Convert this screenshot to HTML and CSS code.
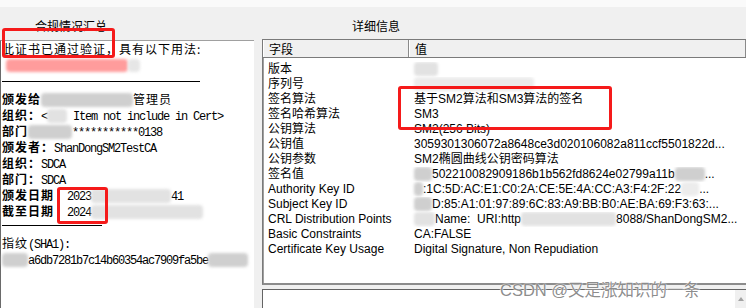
FILE: index.html
```html
<!DOCTYPE html>
<html lang="zh-CN">
<head>
    <meta charset="UTF-8">
    <title>证书详细信息</title>
    <link rel="stylesheet" href="styles.css">
</head>
<body>
    <div class="strip"></div>
    <div class="window">
        <!-- 合规情况汇总 -->
        <section class="summary">
            <div class="caption">合规情况汇总</div>
            <div class="summary-body">
                <p class="line">此证书已通过验证，具有以下用法:</p>
                <div class="usage"><span class="smudge pink"></span><span class="smudge grey w12"></span></div>
                <hr class="rule long">
                <p class="line first"><b>颁发给</b><span class="smudge w92"></span>管理员</p>
                <p class="line"><b>组织：</b><span class="mono">&lt;</span><span class="smudge light w20"></span><span class="mono"> Item not include in Cert&gt;</span></p>
                <p class="line"><b>部门</b><span class="smudge w44"></span><span class="mono">***********0138</span></p>
                <p class="line"><b>颁发者：</b><span class="mono">ShanDongSM2TestCA</span></p>
                <p class="line"><b>组织：</b><span class="mono">SDCA</span></p>
                <p class="line"><b>部门：</b><span class="mono">SDCA</span></p>
                <p class="line"><b>颁发日期</b><span class="mono date">2023</span><span class="smudge light w80"></span><span class="mono">41</span></p>
                <p class="line"><b>截至日期</b><span class="mono date">2024</span><span class="smudge light w112"></span></p>
                <hr class="rule short">
                <p class="line print">指纹<span class="mono">(SHA1):</span></p>
                <p class="line"><span class="smudge w26"></span><span class="mono">a6db7281b7c14b60354ac7909fa5be</span><span class="smudge w40"></span></p>
            </div>
        </section>

        <!-- 详细信息 -->
        <section class="detail">
            <div class="caption">详细信息</div>
            <div class="list">
                <div class="list-head">
                    <span class="head-cell">字段</span>
                    <span class="head-cell">值</span>
                </div>
                <div class="rows">
                    <div class="row"><span>版本</span><span><span class="smudge light w24"></span></span></div>
                    <div class="row"><span>序列号</span><span><span class="smudge faint w120"></span></span></div>
                    <div class="row"><span>签名算法</span><span>基于SM2算法和SM3算法的签名</span></div>
                    <div class="row"><span>签名哈希算法</span><span>SM3</span></div>
                    <div class="row"><span>公钥算法</span><span>SM2(256 Bits)</span></div>
                    <div class="row"><span>公钥值</span><span>3059301306072a8648ce3d020106082a811ccf5501822d...</span></div>
                    <div class="row"><span>公钥参数</span><span>SM2椭圆曲线公钥密码算法</span></div>
                    <div class="row"><span>签名值</span><span><span class="smudge w18"></span>502210082909186b1b562fd8624e02799a11b<span class="smudge w30"></span>...</span></div>
                    <div class="row"><span>Authority Key ID</span><span><span class="smudge w9"></span>:1C:5D:AC:E1:C0:2A:CE:5E:4A:CC:A3:F4:2F:22<span class="smudge faint w18"></span>...</span></div>
                    <div class="row"><span>Subject Key ID</span><span><span class="smudge w18"></span>D:85:A1:01:97:89:6C:83:A9:BB:B0:AE:BA:69:F3:63:...</span></div>
                    <div class="row"><span>CRL Distribution Points</span><span><span class="smudge light w21"></span>Name:&nbsp; URI:http<span class="smudge light w95"></span>8088/ShanDongSM2...</span></div>
                    <div class="row"><span>Basic Constraints</span><span>CA:FALSE</span></div>
                    <div class="row"><span>Certificate Key Usage</span><span>Digital Signature, Non Repudiation</span></div>
                </div>
            </div>
            <div class="lower">
                <div class="lower-fill"></div>
                <div class="scroll"><span class="arrow"></span></div>
            </div>
        </section>
    </div>

    <!-- 标注框与水印 -->
    <div class="mark mark-valid"></div>
    <div class="mark mark-algo"></div>
    <div class="mark mark-date"></div>
    <div class="watermark">CSDN @又是涨知识的一条</div>
</body>
</html>
```

FILE: styles.css
```css
/* 基础 */
* {
    margin: 0;
    padding: 0;
    box-sizing: border-box;
}

body {
    width: 746px;
    height: 308px;
    overflow: hidden;
    position: relative;
    background: #f0f0f0;
    color: #000;
    font-family: "Liberation Sans", "Noto Sans CJK SC", sans-serif;
}

.strip {
    height: 7px;
    background: #fafafa;
}

.window {
    display: grid;
    grid-template-columns: 254px 1fr;
    height: 301px;
}

.caption {
    font-size: 12px;
    line-height: 12px;
    padding-top: 14px;
}

/* 左侧汇总 */
.summary .caption {
    height: 33px;
    padding-left: 35px;
}

.summary-body {
    height: 268px;
    background: #fff;
    border-top: 1px solid #a0a0a0;
    border-left: 1px solid #6a6a6a;
    padding-left: 1px;
    font-family: "Noto Sans CJK SC", sans-serif;
    font-size: 12px;
    letter-spacing: 1px;
    line-height: 16px;
}

.line {
    white-space: nowrap;
    height: 16px;
}

.line b {
    font-weight: bold;
}

.line.first {
    margin-top: 9px;
}

.line.print {
    margin-top: 9px;
}

.mono {
    font-family: "Liberation Mono", monospace;
    font-size: 12px;
    letter-spacing: -1.2px;
}

.date {
    margin-left: 13px;
}

.usage {
    display: flex;
    margin: 2px 0 0 4px;
    height: 13px;
}

.rule {
    border: none;
    height: 1px;
    background: #000;
}

.rule.long {
    width: 198px;
    margin-top: 9px;
}

.rule.short {
    width: 100px;
    margin-top: 6px;
}

/* 打码块 */
.smudge {
    display: inline-block;
    height: 14px;
    vertical-align: -3px;
    background: #cfcfcf;
    border-radius: 4px;
    filter: blur(1.5px);
}

.smudge.light { background: #e2e2e2; }
.smudge.faint { background: #ececec; }
.smudge.pink {
    width: 122px;
    height: 13px;
    background: #ff9c9c;
}
.smudge.grey {
    height: 13px;
    background: #e6e6e6;
}

.w9 { width: 9px; }
.w12 { width: 12px; }
.w18 { width: 18px; }
.w20 { width: 20px; }
.w21 { width: 21px; }
.w24 { width: 24px; }
.w26 { width: 26px; }
.w30 { width: 30px; }
.w40 { width: 40px; }
.w44 { width: 44px; }
.w80 { width: 80px; }
.w92 { width: 92px; }
.w95 { width: 95px; }
.w112 { width: 112px; }
.w120 { width: 120px; }

/* 右侧详细信息 */
.detail .caption {
    height: 32px;
    padding-left: 98px;
}

.detail {
    display: flex;
    flex-direction: column;
}

.list {
    margin-left: 8px;
    height: 246px;
    background: #fff;
    border-top: 1px solid #7a7a7a;
    border-left: 1px solid #7a7a7a;
    border-bottom: 2px solid #8c8c8c;
    box-shadow: inset 1px 0 #a0a0a0;
    overflow: hidden;
    font-size: 12px;
}

.list-head {
    display: grid;
    grid-template-columns: 146px 1fr;
    height: 18px;
    background: #f0f0f0;
    border-bottom: 1px solid #7a7a7a;
}

.head-cell {
    padding: 3px 0 0 5px;
    line-height: 14px;
    border-left: 1px solid #fff;
    border-right: 1px solid #8a8a8a;
}

.rows {
    padding-top: 4px;
}

.row {
    display: grid;
    grid-template-columns: 146px 1fr;
    height: 15px;
    line-height: 15px;
    white-space: nowrap;
}

.row > span {
    padding-left: 5px;
    overflow: hidden;
}

.lower {
    margin-top: 4px;
    margin-left: 8px;
    flex: 1;
    display: flex;
    background: #fff;
    border-top: 1px solid #646464;
    border-left: 1px solid #646464;
}

.lower-fill {
    flex: 1;
}

.scroll {
    width: 11px;
    background: #f0f0f0;
    display: flex;
    justify-content: center;
    padding-top: 7px;
}

.arrow {
    width: 0;
    height: 0;
    border-left: 3px solid transparent;
    border-right: 3px solid transparent;
    border-bottom: 4px solid #a3a3a3;
}

/* 红色标注框 */
.mark {
    position: absolute;
    border: 3px solid #f51a1a;
    border-radius: 3px;
}

.mark-valid {
    left: 2px;
    top: 28px;
    width: 113px;
    height: 30px;
}

.mark-algo {
    left: 398px;
    top: 86px;
    width: 214px;
    height: 44px;
}

.mark-date {
    left: 57px;
    top: 187px;
    width: 51px;
    height: 37px;
}

/* 水印 */
.watermark {
    position: absolute;
    left: 500px;
    top: 281px;
    font-size: 16.5px;
    line-height: 18px;
    color: rgba(120, 120, 120, 0.85);
    text-shadow: 0 0 2px #fff, 0 0 1px #fff;
    white-space: nowrap;
}
```
